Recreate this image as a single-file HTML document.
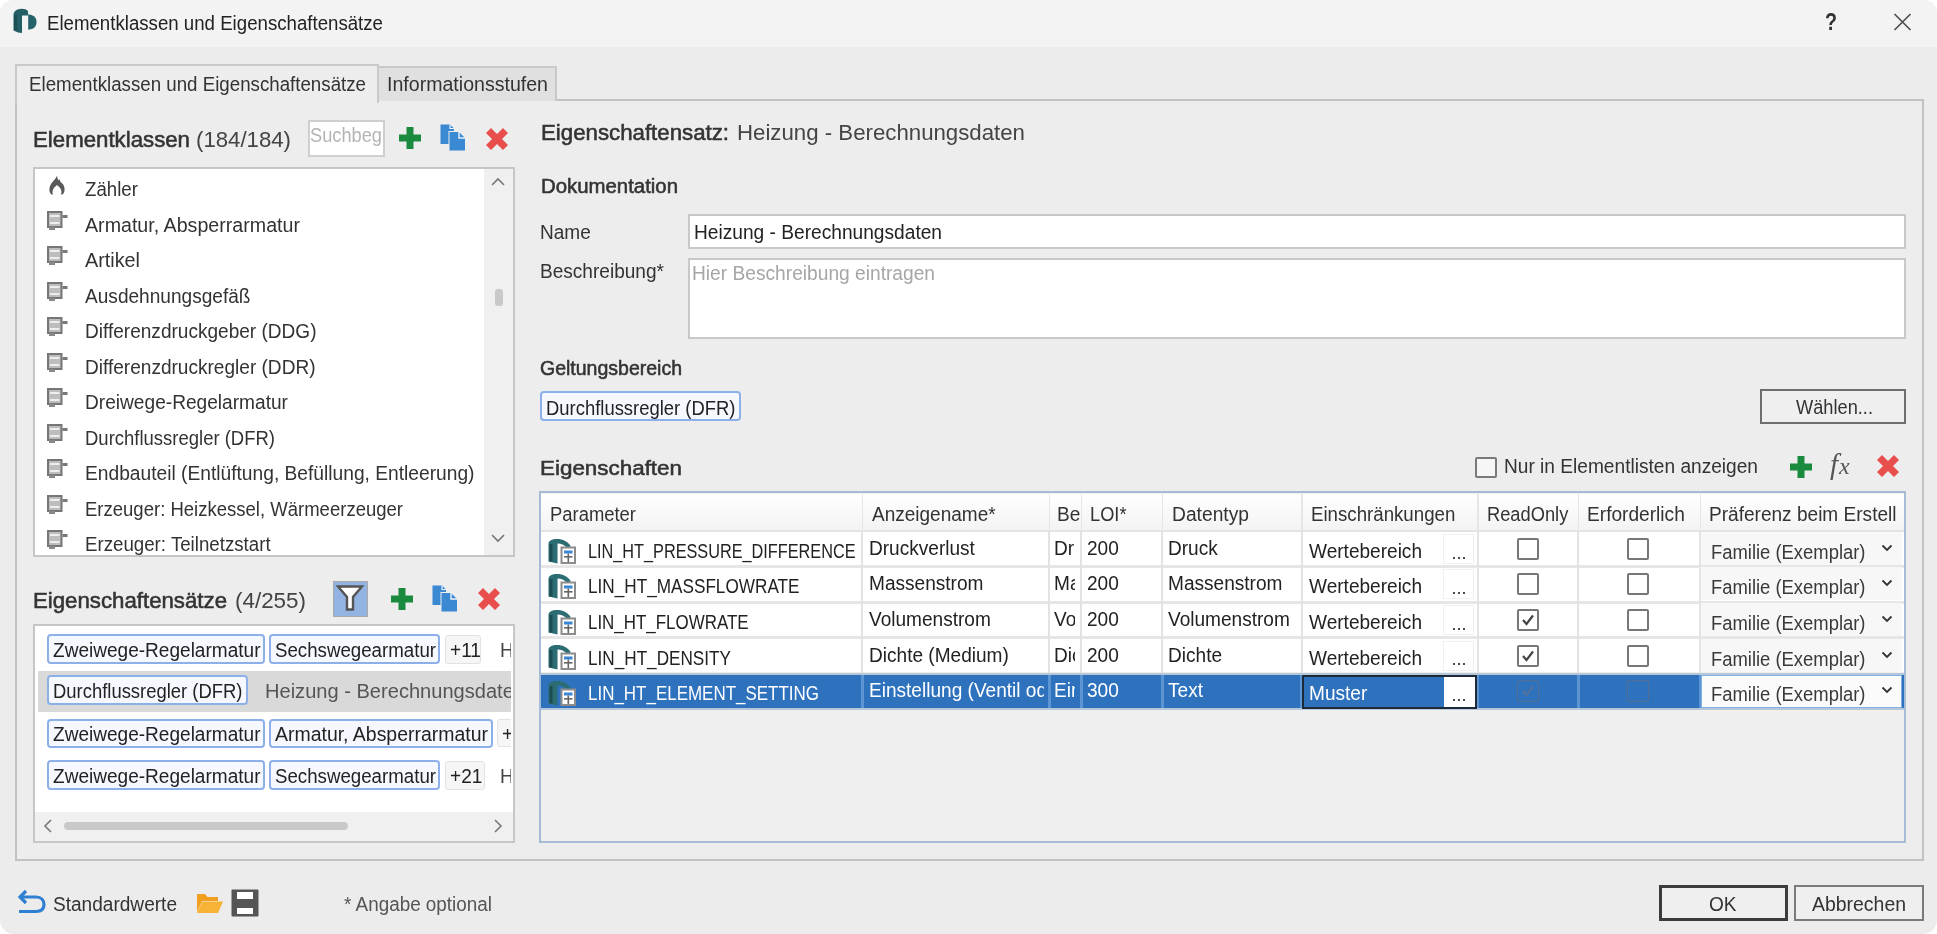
<!DOCTYPE html>
<html><head><meta charset="utf-8"><title>Elementklassen und Eigenschaftensätze</title>
<style>
html,body{margin:0;padding:0;width:1937px;height:934px;overflow:hidden;background:#ffffff;}
.t{position:absolute;line-height:1;white-space:nowrap;font-family:"Liberation Sans",sans-serif;}
.r{position:absolute;box-sizing:border-box;}
svg.r{overflow:visible;}
</style></head><body>
<div id="root" style="position:absolute;left:0;top:0;width:1937px;height:934px;filter:blur(0.6px)">
<div class="r" style="left:0.0px;top:0.0px;width:1937.0px;height:934.0px;background:#ececec;border-radius:14px;"></div>
<div class="r" style="left:0.0px;top:0.0px;width:1937.0px;height:47.0px;background:#f3f3f3;border-radius:14px 14px 0 0;"></div>
<svg class="r" style="left:12.0px;top:8.0px" width="26" height="26" viewBox="0 0 26 26"><path d="M1.5 6.5 C2 3 5 1 9.5 0.8 C12.5 0.8 14.5 1.5 16 3 L16 7.5 L10 7.5 L10 25 L6 24.5 L1.5 22.5 Z" fill="#255f66"/><path d="M3.5 7 L3.5 22" stroke="#1c4e54" stroke-width="3"/><path d="M16.2 6.2 L19.5 7 C22.5 8 24.5 10 24.5 14 C24.5 18 22.5 20.5 19.5 21 L16.2 21.7 Z" fill="#24636a"/></svg>
<div class="t " style="left:47.0px;top:13.07px;font-size:20.0px;transform:scaleX(0.9327);transform-origin:0 0;color:#222;">Elementklassen und Eigenschaftensätze</div>
<div class="t " style="left:1824.5px;top:10.18px;font-size:24.0px;font-weight:700;transform:scaleX(0.8185);transform-origin:0 0;color:#333;">?</div>
<svg class="r" style="left:1893.0px;top:13.0px" width="19" height="18" viewBox="0 0 19 18"><path d="M1.5 1 L17.5 17 M17.5 1 L1.5 17" stroke="#505050" stroke-width="1.7"/></svg>
<div class="r" style="left:15.0px;top:99.0px;width:1908.5px;height:762.0px;border:2px solid #c2c2c2;background:#ededed;"></div>
<div class="r" style="left:377.0px;top:65.5px;width:179.5px;height:35.5px;border:2px solid #c9c9c9;border-bottom:none;background:#e0e0e0;"></div>
<div class="t " style="left:386.5px;top:74.07px;font-size:20.0px;transform:scaleX(0.9785);transform-origin:0 0;color:#333;">Informationsstufen</div>
<div class="r" style="left:15.0px;top:63.5px;width:364.0px;height:39.5px;border:2px solid #c9c9c9;border-bottom:none;background:#ededed;"></div>
<div class="t " style="left:28.5px;top:74.47px;font-size:20.0px;transform:scaleX(0.9355);transform-origin:0 0;color:#333;">Elementklassen und Eigenschaftensätze</div>
<div class="t " style="left:33.3px;top:129.38px;font-size:22.0px;transform:scaleX(1.0109);transform-origin:0 0;color:#333;-webkit-text-stroke:0.55px #333;">Elementklassen</div>
<div class="t " style="left:196.0px;top:129.38px;font-size:22.0px;transform:scaleX(1.0087);transform-origin:0 0;color:#444;">(184/184)</div>
<div class="r" style="left:308.0px;top:120.0px;width:76.5px;height:36.5px;border:2px solid #cfcfcf;background:#fff;"></div>
<div class="t " style="left:310.0px;top:124.57px;font-size:20.0px;transform:scaleX(0.9119);transform-origin:0 0;color:#b4b4b4;">Suchbeg</div>
<svg class="r" style="left:398.0px;top:125.5px" width="24" height="24" viewBox="0 0 24 24"><path d="M8.5 1 H15.5 V8.5 H23 V15.5 H15.5 V23 H8.5 V15.5 H1 V8.5 H8.5Z" fill="#1a8a3e"/></svg>
<svg class="r" style="left:440.0px;top:124.0px" width="26" height="27" viewBox="0 0 26 27"><path d="M0.5 0.5 H10 L14 4.5 V7 H8.5 V20 H0.5Z" fill="#3b88d3"/><path d="M9.5 8 H19 L25 14 V26.5 H9.5Z" fill="#3b88d3"/><path d="M19 8 V14 H25" fill="none" stroke="#eaf2fb" stroke-width="1.4"/><path d="M10 0.5 V4.5 H14" fill="none" stroke="#eaf2fb" stroke-width="1.2"/></svg>
<svg class="r" style="left:486.0px;top:127.5px" width="22" height="22" viewBox="0 0 22 22"><path d="M0 5 L5 0 L11 6 L17 0 L22 5 L16 11 L22 17 L17 22 L11 16 L5 22 L0 17 L6 11Z" fill="#e84f4c"/></svg>
<div class="r" style="left:32.5px;top:167.0px;width:482.5px;height:390.0px;border:2px solid #c6c6c6;background:#fff;"></div>
<div class="r" style="left:484.0px;top:169.0px;width:29.0px;height:386.0px;background:#f0f0f0;"></div>
<div class="r" style="left:494.5px;top:288.5px;width:8.0px;height:17.5px;background:#c9c9c9;border-radius:3px;"></div>
<svg class="r" style="left:490.0px;top:177.0px" width="16" height="10" viewBox="0 0 16 10"><path d="M2 8 L8 2 L14 8" fill="none" stroke="#777" stroke-width="1.6"/></svg>
<svg class="r" style="left:490.0px;top:533.0px" width="16" height="10" viewBox="0 0 16 10"><path d="M2 2 L8 8 L14 2" fill="none" stroke="#777" stroke-width="1.6"/></svg>
<div class="r" style="left:34.5px;top:169px;width:449.5px;height:386px;overflow:hidden">
<svg class="r" style="left:13.5px;top:6.0px" width="18" height="20" viewBox="0 0 18 20"><path d="M9 0.5 C8 4 4.5 6 2.5 10 C0.5 14 1.5 18 3.5 19.5 L5 19.5 C3.8 16 5 13 9 10 C13 13 14.2 16 13 19.5 L14.5 19.5 C16.5 18 17.5 14 15.5 10 C14.5 8 12 7.5 11.5 4 C10.5 5.5 10 6 9 0.5Z" fill="#5a5a5a"/></svg>
<div class="t " style="left:50.5px;top:10.07px;font-size:20.0px;transform:scaleX(0.9349);transform-origin:0 0;color:#333;">Zähler</div>
<svg class="r" style="left:12.5px;top:41.5px" width="22" height="20" viewBox="0 0 22 20"><rect x="1" y="1" width="13.5" height="15" fill="#bdbdbd" stroke="#767676" stroke-width="2"/><rect x="3" y="4" width="9.5" height="2" fill="#eeeeee"/><rect x="3" y="11" width="9.5" height="2" fill="#eeeeee"/><rect x="15.5" y="4" width="5" height="3" fill="#777"/><rect x="2" y="16" width="6" height="3" fill="#888"/></svg>
<div class="t " style="left:50.5px;top:45.57px;font-size:20.0px;transform:scaleX(0.9818);transform-origin:0 0;color:#333;">Armatur, Absperrarmatur</div>
<svg class="r" style="left:12.5px;top:77.0px" width="22" height="20" viewBox="0 0 22 20"><rect x="1" y="1" width="13.5" height="15" fill="#bdbdbd" stroke="#767676" stroke-width="2"/><rect x="3" y="4" width="9.5" height="2" fill="#eeeeee"/><rect x="3" y="11" width="9.5" height="2" fill="#eeeeee"/><rect x="15.5" y="4" width="5" height="3" fill="#777"/><rect x="2" y="16" width="6" height="3" fill="#888"/></svg>
<div class="t " style="left:50.5px;top:81.07px;font-size:20.0px;transform:scaleX(0.9898);transform-origin:0 0;color:#333;">Artikel</div>
<svg class="r" style="left:12.5px;top:112.5px" width="22" height="20" viewBox="0 0 22 20"><rect x="1" y="1" width="13.5" height="15" fill="#bdbdbd" stroke="#767676" stroke-width="2"/><rect x="3" y="4" width="9.5" height="2" fill="#eeeeee"/><rect x="3" y="11" width="9.5" height="2" fill="#eeeeee"/><rect x="15.5" y="4" width="5" height="3" fill="#777"/><rect x="2" y="16" width="6" height="3" fill="#888"/></svg>
<div class="t " style="left:50.5px;top:116.57px;font-size:20.0px;transform:scaleX(0.9540);transform-origin:0 0;color:#333;">Ausdehnungsgefäß</div>
<svg class="r" style="left:12.5px;top:148.0px" width="22" height="20" viewBox="0 0 22 20"><rect x="1" y="1" width="13.5" height="15" fill="#bdbdbd" stroke="#767676" stroke-width="2"/><rect x="3" y="4" width="9.5" height="2" fill="#eeeeee"/><rect x="3" y="11" width="9.5" height="2" fill="#eeeeee"/><rect x="15.5" y="4" width="5" height="3" fill="#777"/><rect x="2" y="16" width="6" height="3" fill="#888"/></svg>
<div class="t " style="left:50.5px;top:152.07px;font-size:20.0px;transform:scaleX(0.9525);transform-origin:0 0;color:#333;">Differenzdruckgeber (DDG)</div>
<svg class="r" style="left:12.5px;top:183.5px" width="22" height="20" viewBox="0 0 22 20"><rect x="1" y="1" width="13.5" height="15" fill="#bdbdbd" stroke="#767676" stroke-width="2"/><rect x="3" y="4" width="9.5" height="2" fill="#eeeeee"/><rect x="3" y="11" width="9.5" height="2" fill="#eeeeee"/><rect x="15.5" y="4" width="5" height="3" fill="#777"/><rect x="2" y="16" width="6" height="3" fill="#888"/></svg>
<div class="t " style="left:50.5px;top:187.57px;font-size:20.0px;transform:scaleX(0.9528);transform-origin:0 0;color:#333;">Differenzdruckregler (DDR)</div>
<svg class="r" style="left:12.5px;top:219.0px" width="22" height="20" viewBox="0 0 22 20"><rect x="1" y="1" width="13.5" height="15" fill="#bdbdbd" stroke="#767676" stroke-width="2"/><rect x="3" y="4" width="9.5" height="2" fill="#eeeeee"/><rect x="3" y="11" width="9.5" height="2" fill="#eeeeee"/><rect x="15.5" y="4" width="5" height="3" fill="#777"/><rect x="2" y="16" width="6" height="3" fill="#888"/></svg>
<div class="t " style="left:50.5px;top:223.07px;font-size:20.0px;transform:scaleX(0.9561);transform-origin:0 0;color:#333;">Dreiwege-Regelarmatur</div>
<svg class="r" style="left:12.5px;top:254.5px" width="22" height="20" viewBox="0 0 22 20"><rect x="1" y="1" width="13.5" height="15" fill="#bdbdbd" stroke="#767676" stroke-width="2"/><rect x="3" y="4" width="9.5" height="2" fill="#eeeeee"/><rect x="3" y="11" width="9.5" height="2" fill="#eeeeee"/><rect x="15.5" y="4" width="5" height="3" fill="#777"/><rect x="2" y="16" width="6" height="3" fill="#888"/></svg>
<div class="t " style="left:50.5px;top:258.57px;font-size:20.0px;transform:scaleX(0.9242);transform-origin:0 0;color:#333;">Durchflussregler (DFR)</div>
<svg class="r" style="left:12.5px;top:290.0px" width="22" height="20" viewBox="0 0 22 20"><rect x="1" y="1" width="13.5" height="15" fill="#bdbdbd" stroke="#767676" stroke-width="2"/><rect x="3" y="4" width="9.5" height="2" fill="#eeeeee"/><rect x="3" y="11" width="9.5" height="2" fill="#eeeeee"/><rect x="15.5" y="4" width="5" height="3" fill="#777"/><rect x="2" y="16" width="6" height="3" fill="#888"/></svg>
<div class="t " style="left:50.5px;top:294.07px;font-size:20.0px;transform:scaleX(0.9597);transform-origin:0 0;color:#333;">Endbauteil (Entlüftung, Befüllung, Entleerung)</div>
<svg class="r" style="left:12.5px;top:325.5px" width="22" height="20" viewBox="0 0 22 20"><rect x="1" y="1" width="13.5" height="15" fill="#bdbdbd" stroke="#767676" stroke-width="2"/><rect x="3" y="4" width="9.5" height="2" fill="#eeeeee"/><rect x="3" y="11" width="9.5" height="2" fill="#eeeeee"/><rect x="15.5" y="4" width="5" height="3" fill="#777"/><rect x="2" y="16" width="6" height="3" fill="#888"/></svg>
<div class="t " style="left:50.5px;top:329.57px;font-size:20.0px;transform:scaleX(0.9259);transform-origin:0 0;color:#333;">Erzeuger: Heizkessel, Wärmeerzeuger</div>
<svg class="r" style="left:12.5px;top:361.0px" width="22" height="20" viewBox="0 0 22 20"><rect x="1" y="1" width="13.5" height="15" fill="#bdbdbd" stroke="#767676" stroke-width="2"/><rect x="3" y="4" width="9.5" height="2" fill="#eeeeee"/><rect x="3" y="11" width="9.5" height="2" fill="#eeeeee"/><rect x="15.5" y="4" width="5" height="3" fill="#777"/><rect x="2" y="16" width="6" height="3" fill="#888"/></svg>
<div class="t " style="left:50.5px;top:365.07px;font-size:20.0px;transform:scaleX(0.9345);transform-origin:0 0;color:#333;">Erzeuger: Teilnetzstart</div>
</div>
<div class="t " style="left:33.4px;top:590.08px;font-size:22.0px;transform:scaleX(1.0103);transform-origin:0 0;color:#333;-webkit-text-stroke:0.55px #333;">Eigenschaftensätze</div>
<div class="t " style="left:234.8px;top:590.08px;font-size:22.0px;transform:scaleX(1.0185);transform-origin:0 0;color:#444;">(4/255)</div>
<div class="r" style="left:332.5px;top:580.5px;width:35.5px;height:36.0px;border:1.5px solid #a9a9a9;background:#93b3e2;"></div>
<svg class="r" style="left:336.0px;top:585.0px" width="28" height="27" viewBox="0 0 28 27"><path d="M2 1.5 H26 L17 12 V24.5 H11 V12 Z" fill="#fff" stroke="#555" stroke-width="2.4" stroke-linejoin="miter"/></svg>
<svg class="r" style="left:390.0px;top:586.5px" width="24" height="24" viewBox="0 0 24 24"><path d="M8.5 1 H15.5 V8.5 H23 V15.5 H15.5 V23 H8.5 V15.5 H1 V8.5 H8.5Z" fill="#1a8a3e"/></svg>
<svg class="r" style="left:432.0px;top:585.0px" width="26" height="27" viewBox="0 0 26 27"><path d="M0.5 0.5 H10 L14 4.5 V7 H8.5 V20 H0.5Z" fill="#3b88d3"/><path d="M9.5 8 H19 L25 14 V26.5 H9.5Z" fill="#3b88d3"/><path d="M19 8 V14 H25" fill="none" stroke="#eaf2fb" stroke-width="1.4"/><path d="M10 0.5 V4.5 H14" fill="none" stroke="#eaf2fb" stroke-width="1.2"/></svg>
<svg class="r" style="left:478.0px;top:588.0px" width="22" height="22" viewBox="0 0 22 22"><path d="M0 5 L5 0 L11 6 L17 0 L22 5 L16 11 L22 17 L17 22 L11 16 L5 22 L0 17 L6 11Z" fill="#e84f4c"/></svg>
<div class="r" style="left:32.5px;top:624.0px;width:482.5px;height:218.5px;border:2px solid #c6c6c6;background:#fff;"></div>
<div class="r" style="left:38.0px;top:670.5px;width:472.5px;height:41.0px;background:#d9d9d9;"></div>
<div class="r" style="left:34.5px;top:812.0px;width:478.5px;height:28.5px;background:#f0f0f0;"></div>
<div class="r" style="left:63.5px;top:821.5px;width:284.0px;height:8.0px;background:#c9c9c9;border-radius:4px;"></div>
<svg class="r" style="left:43.0px;top:818.0px" width="10" height="16" viewBox="0 0 10 16"><path d="M8 2 L2 8 L8 14" fill="none" stroke="#777" stroke-width="1.6"/></svg>
<svg class="r" style="left:493.0px;top:818.0px" width="10" height="16" viewBox="0 0 10 16"><path d="M2 2 L8 8 L2 14" fill="none" stroke="#777" stroke-width="1.6"/></svg>
<div class="r" style="left:34.5px;top:626px;width:476px;height:186px;overflow:hidden">
<div class="r" style="left:12.6px;top:7.8px;width:218.3px;height:30.2px;border:2px solid #8db0ea;border-radius:4px;background:#f5f9ff;"></div>
<div class="t " style="left:18.7px;top:13.57px;font-size:20.0px;transform:scaleX(0.9524);transform-origin:0 0;color:#222;">Zweiwege-Regelarmatur</div>
<div class="r" style="left:234.7px;top:7.8px;width:171.2px;height:30.2px;border:2px solid #8db0ea;border-radius:4px;background:#f5f9ff;"></div>
<div class="t " style="left:240.8px;top:13.57px;font-size:20.0px;transform:scaleX(0.9344);transform-origin:0 0;color:#222;">Sechswegearmatur</div>
<div class="r" style="left:410.5px;top:8.5px;width:36.0px;height:29.0px;border:1.5px solid #e2e2e2;border-radius:3px;background:#f6f6f6;"></div>
<div class="t " style="left:415.5px;top:13.57px;font-size:20.0px;transform:scaleX(0.953);transform-origin:0 0;color:#222;">+11</div>
<div class="t " style="left:465.5px;top:13.57px;font-size:20.0px;transform:scaleX(0.953);transform-origin:0 0;color:#444;">H</div>
<div class="r" style="left:12.6px;top:49.2px;width:200.9px;height:30.1px;border:2px solid #8db0ea;border-radius:4px;background:#f5f9ff;"></div>
<div class="t " style="left:18.7px;top:54.87px;font-size:20.0px;transform:scaleX(0.9217);transform-origin:0 0;color:#222;">Durchflussregler (DFR)</div>
<div class="t " style="left:230.5px;top:55.07px;font-size:20.0px;transform:scaleX(1.0036);transform-origin:0 0;color:#555;">Heizung - Berechnungsdaten</div>
<div class="r" style="left:12.6px;top:92.6px;width:218.3px;height:29.4px;border:2px solid #8db0ea;border-radius:4px;background:#f5f9ff;"></div>
<div class="t " style="left:18.7px;top:97.57px;font-size:20.0px;transform:scaleX(0.9524);transform-origin:0 0;color:#222;">Zweiwege-Regelarmatur</div>
<div class="r" style="left:234.7px;top:92.6px;width:224.2px;height:29.4px;border:2px solid #8db0ea;border-radius:4px;background:#f5f9ff;"></div>
<div class="t " style="left:240.8px;top:97.57px;font-size:20.0px;transform:scaleX(0.9727);transform-origin:0 0;color:#222;">Armatur, Absperrarmatur</div>
<div class="r" style="left:462.5px;top:93.3px;width:23.0px;height:28.2px;border:1.5px solid #e2e2e2;border-radius:3px;background:#f6f6f6;"></div>
<div class="t " style="left:467.5px;top:97.57px;font-size:20.0px;transform:scaleX(0.953);transform-origin:0 0;color:#222;">+</div>
<div class="r" style="left:12.6px;top:134.0px;width:218.3px;height:30.1px;border:2px solid #8db0ea;border-radius:4px;background:#f5f9ff;"></div>
<div class="t " style="left:18.7px;top:139.67px;font-size:20.0px;transform:scaleX(0.9524);transform-origin:0 0;color:#222;">Zweiwege-Regelarmatur</div>
<div class="r" style="left:234.7px;top:134.0px;width:171.2px;height:30.1px;border:2px solid #8db0ea;border-radius:4px;background:#f5f9ff;"></div>
<div class="t " style="left:240.8px;top:139.67px;font-size:20.0px;transform:scaleX(0.9344);transform-origin:0 0;color:#222;">Sechswegearmatur</div>
<div class="r" style="left:410.5px;top:134.7px;width:40.0px;height:28.9px;border:1.5px solid #e2e2e2;border-radius:3px;background:#f6f6f6;"></div>
<div class="t " style="left:415.5px;top:139.67px;font-size:20.0px;transform:scaleX(0.953);transform-origin:0 0;color:#222;">+21</div>
<div class="t " style="left:465.5px;top:140.07px;font-size:20.0px;transform:scaleX(0.953);transform-origin:0 0;color:#444;">H</div>
</div>
<div class="t " style="left:540.6px;top:122.38px;font-size:22.0px;transform:scaleX(1.0113);transform-origin:0 0;color:#333;-webkit-text-stroke:0.55px #333;">Eigenschaftensatz:</div>
<div class="t " style="left:736.9px;top:122.38px;font-size:22.0px;transform:scaleX(1.0106);transform-origin:0 0;color:#444;">Heizung - Berechnungsdaten</div>
<div class="t " style="left:540.6px;top:176.07px;font-size:20.0px;transform:scaleX(1.0184);transform-origin:0 0;color:#333;-webkit-text-stroke:0.55px #333;">Dokumentation</div>
<div class="t " style="left:540.3px;top:222.07px;font-size:20.0px;transform:scaleX(0.953);transform-origin:0 0;color:#333;">Name</div>
<div class="r" style="left:687.5px;top:213.5px;width:1218.5px;height:35.5px;border:2px solid #c8c8c8;background:#fff;"></div>
<div class="t " style="left:693.8px;top:222.07px;font-size:20.0px;transform:scaleX(0.9573);transform-origin:0 0;color:#222;">Heizung - Berechnungsdaten</div>
<div class="t " style="left:540.3px;top:260.67px;font-size:20.0px;transform:scaleX(0.953);transform-origin:0 0;color:#333;">Beschreibung*</div>
<div class="r" style="left:687.5px;top:257.5px;width:1218.5px;height:81.0px;border:2px solid #c8c8c8;background:#fff;"></div>
<div class="t " style="left:691.5px;top:263.07px;font-size:20.0px;transform:scaleX(0.9586);transform-origin:0 0;color:#a6a6a6;">Hier Beschreibung eintragen</div>
<div class="t " style="left:539.6px;top:358.07px;font-size:20.0px;transform:scaleX(0.9750);transform-origin:0 0;color:#333;-webkit-text-stroke:0.55px #333;">Geltungsbereich</div>
<div class="r" style="left:540.4px;top:391.4px;width:200.6px;height:29.9px;border:2px solid #8db0ea;border-radius:4px;background:#f5f9ff;"></div>
<div class="t " style="left:546.0px;top:397.77px;font-size:20.0px;transform:scaleX(0.9217);transform-origin:0 0;color:#222;">Durchflussregler (DFR)</div>
<div class="r" style="left:1759.5px;top:389.0px;width:146.0px;height:35.0px;border:2px solid #6e6e6e;background:#efefef;"></div>
<div class="t " style="left:1795.5px;top:397.07px;font-size:20.0px;transform:scaleX(0.9114);transform-origin:0 0;color:#333;">Wählen...</div>
<div class="t " style="left:539.6px;top:457.22px;font-size:21.0px;transform:scaleX(1.0669);transform-origin:0 0;color:#333;-webkit-text-stroke:0.55px #333;">Eigenschaften</div>
<div class="r" style="left:1475.0px;top:456.5px;width:22.0px;height:21.5px;border:2px solid #7a7a7a;border-radius:2px;background:#f6f6f6;"></div>
<div class="t " style="left:1503.8px;top:456.07px;font-size:20.0px;transform:scaleX(0.9559);transform-origin:0 0;color:#333;">Nur in Elementlisten anzeigen</div>
<svg class="r" style="left:1788.5px;top:454.5px" width="24" height="24" viewBox="0 0 24 24"><path d="M8.5 1 H15.5 V8.5 H23 V15.5 H15.5 V23 H8.5 V15.5 H1 V8.5 H8.5Z" fill="#1a8a3e"/></svg>
<div class="t" style="left:1830px;top:450px;font-family:'Liberation Serif',serif;font-style:italic;font-size:29px;color:#555;">f<span style="font-size:24px;margin-left:1px">x</span></div>
<svg class="r" style="left:1876.5px;top:454.5px" width="22" height="22" viewBox="0 0 22 22"><path d="M0 5 L5 0 L11 6 L17 0 L22 5 L16 11 L22 17 L17 22 L11 16 L5 22 L0 17 L6 11Z" fill="#e84f4c"/></svg>
<div class="r" style="left:538.5px;top:491.0px;width:1367.0px;height:352.0px;border:2.5px solid #a5bbd6;background:#efefef;"></div>
<div class="r" style="left:540.5px;top:493.5px;width:1363.0px;height:37.5px;background:linear-gradient(#ffffff,#f3f3f3);"></div>
<div class="r" style="left:540.5px;top:529.5px;width:1363.0px;height:2.0px;background:#e3e3e3;"></div>
<div class="r" style="left:861.5px;top:493.5px;width:1.5px;height:37.5px;background:#e6e6e6;"></div>
<div class="r" style="left:1048.5px;top:493.5px;width:1.5px;height:37.5px;background:#e6e6e6;"></div>
<div class="r" style="left:1080.5px;top:493.5px;width:1.5px;height:37.5px;background:#e6e6e6;"></div>
<div class="r" style="left:1161.8px;top:493.5px;width:1.5px;height:37.5px;background:#e6e6e6;"></div>
<div class="r" style="left:1301.0px;top:493.5px;width:1.5px;height:37.5px;background:#e6e6e6;"></div>
<div class="r" style="left:1477.2px;top:493.5px;width:1.5px;height:37.5px;background:#e6e6e6;"></div>
<div class="r" style="left:1577.5px;top:493.5px;width:1.5px;height:37.5px;background:#e6e6e6;"></div>
<div class="r" style="left:1699.5px;top:493.5px;width:1.5px;height:37.5px;background:#e6e6e6;"></div>
<div class="t " style="left:550.0px;top:504.07px;font-size:20.0px;transform:scaleX(0.9210);transform-origin:0 0;color:#333;">Parameter</div>
<div class="t " style="left:871.5px;top:504.07px;font-size:20.0px;transform:scaleX(0.9501);transform-origin:0 0;color:#333;">Anzeigename*</div>
<div class="r" style="left:1051px;top:495px;width:29px;height:34px;overflow:hidden">
<div class="t " style="left:6.0px;top:9.07px;font-size:20.0px;transform:scaleX(0.953);transform-origin:0 0;color:#333;">Beschreibung</div>
</div>
<div class="t " style="left:1089.5px;top:504.07px;font-size:20.0px;transform:scaleX(0.9121);transform-origin:0 0;color:#333;">LOI*</div>
<div class="t " style="left:1171.5px;top:504.07px;font-size:20.0px;transform:scaleX(0.9619);transform-origin:0 0;color:#333;">Datentyp</div>
<div class="t " style="left:1310.5px;top:504.07px;font-size:20.0px;transform:scaleX(0.9336);transform-origin:0 0;color:#333;">Einschränkungen</div>
<div class="t " style="left:1487.0px;top:504.07px;font-size:20.0px;transform:scaleX(0.9141);transform-origin:0 0;color:#333;">ReadOnly</div>
<div class="t " style="left:1587.0px;top:504.07px;font-size:20.0px;transform:scaleX(0.9564);transform-origin:0 0;color:#333;">Erforderlich</div>
<div class="r" style="left:1701px;top:495px;width:196px;height:34px;overflow:hidden">
<div class="t " style="left:8.0px;top:9.07px;font-size:20.0px;transform:scaleX(0.953);transform-origin:0 0;color:#333;">Präferenz beim Erstellen</div>
</div>
<div class="r" style="left:540.5px;top:532.0px;width:1363.0px;height:33.4px;background:#fff;"></div>
<div class="r" style="left:540.5px;top:567.4px;width:1363.0px;height:33.6px;background:#fff;"></div>
<div class="r" style="left:540.5px;top:603.0px;width:1363.0px;height:33.7px;background:#fff;"></div>
<div class="r" style="left:540.5px;top:638.7px;width:1363.0px;height:33.7px;background:#fff;"></div>
<div class="r" style="left:540.5px;top:674.8px;width:1363.0px;height:33.2px;background:#2e72be;"></div>
<div class="r" style="left:540.5px;top:564.9px;width:1363.0px;height:3.0px;background:#e6e6e6;"></div>
<div class="r" style="left:540.5px;top:600.5px;width:1363.0px;height:3.0px;background:#e6e6e6;"></div>
<div class="r" style="left:540.5px;top:636.2px;width:1363.0px;height:3.0px;background:#e6e6e6;"></div>
<div class="r" style="left:540.5px;top:672.8px;width:1363.0px;height:2.0px;background:#b7c7da;"></div>
<div class="r" style="left:540.5px;top:708.0px;width:1363.0px;height:2.0px;background:#b7c7da;"></div>
<div class="r" style="left:861.0px;top:531.0px;width:2.0px;height:141.8px;background:#e3e3e3;"></div>
<div class="r" style="left:1048.0px;top:531.0px;width:2.0px;height:141.8px;background:#e3e3e3;"></div>
<div class="r" style="left:1080.0px;top:531.0px;width:2.0px;height:141.8px;background:#e3e3e3;"></div>
<div class="r" style="left:1161.3px;top:531.0px;width:2.0px;height:141.8px;background:#e3e3e3;"></div>
<div class="r" style="left:1300.5px;top:531.0px;width:2.0px;height:141.8px;background:#e3e3e3;"></div>
<div class="r" style="left:1476.7px;top:531.0px;width:2.0px;height:141.8px;background:#e3e3e3;"></div>
<div class="r" style="left:1577.0px;top:531.0px;width:2.0px;height:141.8px;background:#e3e3e3;"></div>
<div class="r" style="left:1699.0px;top:531.0px;width:2.0px;height:141.8px;background:#e3e3e3;"></div>
<div class="r" style="left:860.5px;top:674.8px;width:3.0px;height:33.2px;background:#5b95d3;"></div>
<div class="r" style="left:1047.5px;top:674.8px;width:3.0px;height:33.2px;background:#5b95d3;"></div>
<div class="r" style="left:1079.5px;top:674.8px;width:3.0px;height:33.2px;background:#5b95d3;"></div>
<div class="r" style="left:1160.8px;top:674.8px;width:3.0px;height:33.2px;background:#5b95d3;"></div>
<div class="r" style="left:1300.0px;top:674.8px;width:3.0px;height:33.2px;background:#5b95d3;"></div>
<div class="r" style="left:1476.2px;top:674.8px;width:3.0px;height:33.2px;background:#5b95d3;"></div>
<div class="r" style="left:1576.5px;top:674.8px;width:3.0px;height:33.2px;background:#5b95d3;"></div>
<div class="r" style="left:1698.5px;top:674.8px;width:3.0px;height:33.2px;background:#5b95d3;"></div>
<svg class="r" style="left:548.0px;top:537.5px" width="28" height="27" viewBox="0 0 28 27"><path d="M0.5 6 C0.5 2.5 4 1 9 1 C15 1 20 3.5 23 8.5 L18.5 9.5 C16.5 7 13 5.5 9.5 5.5 L9.5 25.5 L0.5 23.5 Z" fill="#2b6d73"/><path d="M3 6 L3 23.5" stroke="#1b4d53" stroke-width="3"/><rect x="13.5" y="9.5" width="13.5" height="15.5" fill="#fff" stroke="#8c8c8c" stroke-width="2"/><rect x="16" y="12.5" width="8.5" height="3" fill="#3a86d6"/><rect x="16" y="18" width="8.5" height="1.6" fill="#666"/><rect x="19.5" y="15.5" width="1.6" height="8.5" fill="#666"/></svg>
<div class="t " style="left:587.7px;top:541.07px;font-size:20.0px;transform:scaleX(0.8131);transform-origin:0 0;color:#222;">LIN_HT_PRESSURE_DIFFERENCE</div>
<div class="r" style="left:864px;top:531.0px;width:180px;height:30px;overflow:hidden">
<div class="t " style="left:4.5px;top:6.87px;font-size:20.0px;transform:scaleX(0.953);transform-origin:0 0;color:#222;">Druckverlust</div>
</div>
<div class="r" style="left:1051px;top:531.0px;width:24px;height:30px;overflow:hidden">
<div class="t " style="left:3.3px;top:6.87px;font-size:20.0px;transform:scaleX(0.953);transform-origin:0 0;color:#222;">Druckverlust</div>
</div>
<div class="t " style="left:1086.8px;top:537.87px;font-size:20.0px;transform:scaleX(0.953);transform-origin:0 0;color:#222;">200</div>
<div class="t " style="left:1168.0px;top:537.87px;font-size:20.0px;transform:scaleX(0.953);transform-origin:0 0;color:#222;">Druck</div>
<div class="r" style="left:1443.0px;top:534.0px;width:31.0px;height:30.0px;background:#fff;border:1px solid #f0f0f0;"></div>
<div class="t " style="left:1308.8px;top:541.07px;font-size:20.0px;transform:scaleX(0.953);transform-origin:0 0;color:#222;">Wertebereich</div>
<div class="r" style="left:1452.5px;top:556.5px;width:14px;height:2px;background-image:linear-gradient(90deg,#4a4a4a 2px,transparent 2px);background-size:5px 2px;"></div>
<div class="r" style="left:1516.5px;top:538.0px;width:22.0px;height:22.0px;border:2px solid #777;border-radius:2px;background:#fff;"></div>
<div class="r" style="left:1626.5px;top:538.0px;width:22.0px;height:22.0px;border:2px solid #777;border-radius:2px;background:#fff;"></div>
<div class="r" style="left:1701.0px;top:532.0px;width:201.0px;height:33.0px;background:#f7f7f7;"></div>
<div class="t " style="left:1710.8px;top:542.07px;font-size:20.0px;transform:scaleX(0.9207);transform-origin:0 0;color:#3a3a3a;">Familie (Exemplar)</div>
<svg class="r" style="left:1881.0px;top:544.0px" width="12" height="8" viewBox="0 0 12 8"><path d="M1.5 1.5 L6 6 L10.5 1.5" fill="none" stroke="#333" stroke-width="1.8"/></svg>
<svg class="r" style="left:548.0px;top:572.9px" width="28" height="27" viewBox="0 0 28 27"><path d="M0.5 6 C0.5 2.5 4 1 9 1 C15 1 20 3.5 23 8.5 L18.5 9.5 C16.5 7 13 5.5 9.5 5.5 L9.5 25.5 L0.5 23.5 Z" fill="#2b6d73"/><path d="M3 6 L3 23.5" stroke="#1b4d53" stroke-width="3"/><rect x="13.5" y="9.5" width="13.5" height="15.5" fill="#fff" stroke="#8c8c8c" stroke-width="2"/><rect x="16" y="12.5" width="8.5" height="3" fill="#3a86d6"/><rect x="16" y="18" width="8.5" height="1.6" fill="#666"/><rect x="19.5" y="15.5" width="1.6" height="8.5" fill="#666"/></svg>
<div class="t " style="left:587.7px;top:576.47px;font-size:20.0px;transform:scaleX(0.8586);transform-origin:0 0;color:#222;">LIN_HT_MASSFLOWRATE</div>
<div class="r" style="left:864px;top:566.4px;width:180px;height:30px;overflow:hidden">
<div class="t " style="left:4.5px;top:6.87px;font-size:20.0px;transform:scaleX(0.953);transform-origin:0 0;color:#222;">Massenstrom</div>
</div>
<div class="r" style="left:1051px;top:566.4px;width:24px;height:30px;overflow:hidden">
<div class="t " style="left:3.3px;top:6.87px;font-size:20.0px;transform:scaleX(0.953);transform-origin:0 0;color:#222;">Massenstrom</div>
</div>
<div class="t " style="left:1086.8px;top:573.27px;font-size:20.0px;transform:scaleX(0.953);transform-origin:0 0;color:#222;">200</div>
<div class="t " style="left:1168.0px;top:573.27px;font-size:20.0px;transform:scaleX(0.953);transform-origin:0 0;color:#222;">Massenstrom</div>
<div class="r" style="left:1443.0px;top:569.4px;width:31.0px;height:30.0px;background:#fff;border:1px solid #f0f0f0;"></div>
<div class="t " style="left:1308.8px;top:576.47px;font-size:20.0px;transform:scaleX(0.953);transform-origin:0 0;color:#222;">Wertebereich</div>
<div class="r" style="left:1452.5px;top:591.9px;width:14px;height:2px;background-image:linear-gradient(90deg,#4a4a4a 2px,transparent 2px);background-size:5px 2px;"></div>
<div class="r" style="left:1516.5px;top:573.4px;width:22.0px;height:22.0px;border:2px solid #777;border-radius:2px;background:#fff;"></div>
<div class="r" style="left:1626.5px;top:573.4px;width:22.0px;height:22.0px;border:2px solid #777;border-radius:2px;background:#fff;"></div>
<div class="r" style="left:1701.0px;top:567.4px;width:201.0px;height:33.0px;background:#f7f7f7;"></div>
<div class="t " style="left:1710.8px;top:577.47px;font-size:20.0px;transform:scaleX(0.9207);transform-origin:0 0;color:#3a3a3a;">Familie (Exemplar)</div>
<svg class="r" style="left:1881.0px;top:579.4px" width="12" height="8" viewBox="0 0 12 8"><path d="M1.5 1.5 L6 6 L10.5 1.5" fill="none" stroke="#333" stroke-width="1.8"/></svg>
<svg class="r" style="left:548.0px;top:608.5px" width="28" height="27" viewBox="0 0 28 27"><path d="M0.5 6 C0.5 2.5 4 1 9 1 C15 1 20 3.5 23 8.5 L18.5 9.5 C16.5 7 13 5.5 9.5 5.5 L9.5 25.5 L0.5 23.5 Z" fill="#2b6d73"/><path d="M3 6 L3 23.5" stroke="#1b4d53" stroke-width="3"/><rect x="13.5" y="9.5" width="13.5" height="15.5" fill="#fff" stroke="#8c8c8c" stroke-width="2"/><rect x="16" y="12.5" width="8.5" height="3" fill="#3a86d6"/><rect x="16" y="18" width="8.5" height="1.6" fill="#666"/><rect x="19.5" y="15.5" width="1.6" height="8.5" fill="#666"/></svg>
<div class="t " style="left:587.7px;top:612.07px;font-size:20.0px;transform:scaleX(0.8468);transform-origin:0 0;color:#222;">LIN_HT_FLOWRATE</div>
<div class="r" style="left:864px;top:602.0px;width:180px;height:30px;overflow:hidden">
<div class="t " style="left:4.5px;top:6.87px;font-size:20.0px;transform:scaleX(0.953);transform-origin:0 0;color:#222;">Volumenstrom</div>
</div>
<div class="r" style="left:1051px;top:602.0px;width:24px;height:30px;overflow:hidden">
<div class="t " style="left:3.3px;top:6.87px;font-size:20.0px;transform:scaleX(0.953);transform-origin:0 0;color:#222;">Volumenstrom</div>
</div>
<div class="t " style="left:1086.8px;top:608.87px;font-size:20.0px;transform:scaleX(0.953);transform-origin:0 0;color:#222;">200</div>
<div class="t " style="left:1168.0px;top:608.87px;font-size:20.0px;transform:scaleX(0.953);transform-origin:0 0;color:#222;">Volumenstrom</div>
<div class="r" style="left:1443.0px;top:605.0px;width:31.0px;height:30.0px;background:#fff;border:1px solid #f0f0f0;"></div>
<div class="t " style="left:1308.8px;top:612.07px;font-size:20.0px;transform:scaleX(0.953);transform-origin:0 0;color:#222;">Wertebereich</div>
<div class="r" style="left:1452.5px;top:627.5px;width:14px;height:2px;background-image:linear-gradient(90deg,#4a4a4a 2px,transparent 2px);background-size:5px 2px;"></div>
<div class="r" style="left:1516.5px;top:609.0px;width:22.0px;height:22.0px;border:2px solid #777;border-radius:2px;background:#fff;"></div>
<svg class="r" style="left:1520.5px;top:613.0px" width="14" height="14" viewBox="0 0 14 14"><path d="M2 7 L5.5 11 L12 2.5" fill="none" stroke="#444" stroke-width="2.2"/></svg>
<div class="r" style="left:1626.5px;top:609.0px;width:22.0px;height:22.0px;border:2px solid #777;border-radius:2px;background:#fff;"></div>
<div class="r" style="left:1701.0px;top:603.0px;width:201.0px;height:33.0px;background:#f7f7f7;"></div>
<div class="t " style="left:1710.8px;top:613.07px;font-size:20.0px;transform:scaleX(0.9207);transform-origin:0 0;color:#3a3a3a;">Familie (Exemplar)</div>
<svg class="r" style="left:1881.0px;top:615.0px" width="12" height="8" viewBox="0 0 12 8"><path d="M1.5 1.5 L6 6 L10.5 1.5" fill="none" stroke="#333" stroke-width="1.8"/></svg>
<svg class="r" style="left:548.0px;top:644.2px" width="28" height="27" viewBox="0 0 28 27"><path d="M0.5 6 C0.5 2.5 4 1 9 1 C15 1 20 3.5 23 8.5 L18.5 9.5 C16.5 7 13 5.5 9.5 5.5 L9.5 25.5 L0.5 23.5 Z" fill="#2b6d73"/><path d="M3 6 L3 23.5" stroke="#1b4d53" stroke-width="3"/><rect x="13.5" y="9.5" width="13.5" height="15.5" fill="#fff" stroke="#8c8c8c" stroke-width="2"/><rect x="16" y="12.5" width="8.5" height="3" fill="#3a86d6"/><rect x="16" y="18" width="8.5" height="1.6" fill="#666"/><rect x="19.5" y="15.5" width="1.6" height="8.5" fill="#666"/></svg>
<div class="t " style="left:587.7px;top:647.77px;font-size:20.0px;transform:scaleX(0.8578);transform-origin:0 0;color:#222;">LIN_HT_DENSITY</div>
<div class="r" style="left:864px;top:637.7px;width:180px;height:30px;overflow:hidden">
<div class="t " style="left:4.5px;top:6.87px;font-size:20.0px;transform:scaleX(0.953);transform-origin:0 0;color:#222;">Dichte (Medium)</div>
</div>
<div class="r" style="left:1051px;top:637.7px;width:24px;height:30px;overflow:hidden">
<div class="t " style="left:3.3px;top:6.87px;font-size:20.0px;transform:scaleX(0.953);transform-origin:0 0;color:#222;">Dichte (Medium)</div>
</div>
<div class="t " style="left:1086.8px;top:644.57px;font-size:20.0px;transform:scaleX(0.953);transform-origin:0 0;color:#222;">200</div>
<div class="t " style="left:1168.0px;top:644.57px;font-size:20.0px;transform:scaleX(0.953);transform-origin:0 0;color:#222;">Dichte</div>
<div class="r" style="left:1443.0px;top:640.7px;width:31.0px;height:30.0px;background:#fff;border:1px solid #f0f0f0;"></div>
<div class="t " style="left:1308.8px;top:647.77px;font-size:20.0px;transform:scaleX(0.953);transform-origin:0 0;color:#222;">Wertebereich</div>
<div class="r" style="left:1452.5px;top:663.2px;width:14px;height:2px;background-image:linear-gradient(90deg,#4a4a4a 2px,transparent 2px);background-size:5px 2px;"></div>
<div class="r" style="left:1516.5px;top:644.7px;width:22.0px;height:22.0px;border:2px solid #777;border-radius:2px;background:#fff;"></div>
<svg class="r" style="left:1520.5px;top:648.7px" width="14" height="14" viewBox="0 0 14 14"><path d="M2 7 L5.5 11 L12 2.5" fill="none" stroke="#444" stroke-width="2.2"/></svg>
<div class="r" style="left:1626.5px;top:644.7px;width:22.0px;height:22.0px;border:2px solid #777;border-radius:2px;background:#fff;"></div>
<div class="r" style="left:1701.0px;top:638.7px;width:201.0px;height:33.0px;background:#f7f7f7;"></div>
<div class="t " style="left:1710.8px;top:648.77px;font-size:20.0px;transform:scaleX(0.9207);transform-origin:0 0;color:#3a3a3a;">Familie (Exemplar)</div>
<svg class="r" style="left:1881.0px;top:650.7px" width="12" height="8" viewBox="0 0 12 8"><path d="M1.5 1.5 L6 6 L10.5 1.5" fill="none" stroke="#333" stroke-width="1.8"/></svg>
<svg class="r" style="left:548.0px;top:679.9px" width="28" height="27" viewBox="0 0 28 27"><path d="M0.5 6 C0.5 2.5 4 1 9 1 C15 1 20 3.5 23 8.5 L18.5 9.5 C16.5 7 13 5.5 9.5 5.5 L9.5 25.5 L0.5 23.5 Z" fill="#2b6d73"/><path d="M3 6 L3 23.5" stroke="#1b4d53" stroke-width="3"/><rect x="13.5" y="9.5" width="13.5" height="15.5" fill="#fff" stroke="#8c8c8c" stroke-width="2"/><rect x="16" y="12.5" width="8.5" height="3" fill="#3a86d6"/><rect x="16" y="18" width="8.5" height="1.6" fill="#666"/><rect x="19.5" y="15.5" width="1.6" height="8.5" fill="#666"/></svg>
<div class="t " style="left:587.7px;top:683.47px;font-size:20.0px;transform:scaleX(0.8483);transform-origin:0 0;color:#fff;">LIN_HT_ELEMENT_SETTING</div>
<div class="r" style="left:864px;top:673.4px;width:180px;height:30px;overflow:hidden">
<div class="t " style="left:4.5px;top:6.87px;font-size:20.0px;transform:scaleX(0.953);transform-origin:0 0;color:#fff;">Einstellung (Ventil oder</div>
</div>
<div class="r" style="left:1051px;top:673.4px;width:24px;height:30px;overflow:hidden">
<div class="t " style="left:3.3px;top:6.87px;font-size:20.0px;transform:scaleX(0.953);transform-origin:0 0;color:#fff;">Einstellung</div>
</div>
<div class="t " style="left:1086.8px;top:680.27px;font-size:20.0px;transform:scaleX(0.953);transform-origin:0 0;color:#fff;">300</div>
<div class="t " style="left:1168.0px;top:680.27px;font-size:20.0px;transform:scaleX(0.953);transform-origin:0 0;color:#fff;">Text</div>
<div class="r" style="left:1302.0px;top:674.6px;width:175.0px;height:34.6px;border:2px solid #1f2a38;background:#2e72be;"></div>
<div class="r" style="left:1443.5px;top:676.6px;width:31.5px;height:30.6px;background:#fff;"></div>
<div class="t " style="left:1308.8px;top:682.87px;font-size:20.0px;transform:scaleX(0.953);transform-origin:0 0;color:#fff;">Muster</div>
<div class="r" style="left:1452.5px;top:698.9px;width:14px;height:2px;background-image:linear-gradient(90deg,#4a4a4a 2px,transparent 2px);background-size:5px 2px;"></div>
<div class="r" style="left:1516.5px;top:680.4px;width:22.0px;height:22.0px;border:1.5px solid #4f6f95;border-radius:2px;"></div>
<svg class="r" style="left:1520.5px;top:684.4px" width="14" height="14" viewBox="0 0 14 14"><path d="M2 7 L5.5 11 L12 2.5" fill="none" stroke="#56729a" stroke-width="2"/></svg>
<div class="r" style="left:1626.5px;top:680.4px;width:22.0px;height:22.0px;border:1.5px solid #4f6f95;border-radius:2px;"></div>
<div class="r" style="left:1701.0px;top:674.8px;width:201.0px;height:33.7px;border:1.5px solid #7fb0e6;background:#fbfbfb;"></div>
<div class="t " style="left:1710.8px;top:684.47px;font-size:20.0px;transform:scaleX(0.9207);transform-origin:0 0;color:#3a3a3a;">Familie (Exemplar)</div>
<svg class="r" style="left:1881.0px;top:686.4px" width="12" height="8" viewBox="0 0 12 8"><path d="M1.5 1.5 L6 6 L10.5 1.5" fill="none" stroke="#333" stroke-width="1.8"/></svg>
<svg class="r" style="left:17.0px;top:889.0px" width="30" height="26" viewBox="0 0 30 26"><path d="M9 2 L3 8 L9 14" fill="none" stroke="#2f7fd2" stroke-width="3.2"/><path d="M3.5 8 H19 C24.5 8 27 11.5 27 15.5 C27 19.5 24.5 22.5 19 22.5 H2" fill="none" stroke="#2f7fd2" stroke-width="3.2"/></svg>
<div class="t " style="left:52.7px;top:893.77px;font-size:20.0px;transform:scaleX(0.9532);transform-origin:0 0;color:#333;">Standardwerte</div>
<svg class="r" style="left:195.5px;top:891.0px" width="28" height="24" viewBox="0 0 28 24"><path d="M1 3 H9 L11.5 6 H22 V10 H6 L1 21Z" fill="#f0a01e"/><path d="M6 10.5 H27 L22 22 H1Z" fill="#f7b335"/></svg>
<svg class="r" style="left:231.0px;top:888.5px" width="28" height="28" viewBox="0 0 28 28"><rect x="0.5" y="0.5" width="27" height="27" rx="1" fill="#555"/><rect x="6" y="3" width="16" height="7" fill="#fff"/><rect x="6" y="19" width="16" height="6" fill="#fff"/></svg>
<div class="t " style="left:343.8px;top:893.67px;font-size:20.0px;transform:scaleX(0.9438);transform-origin:0 0;color:#555;">* Angabe optional</div>
<div class="r" style="left:1658.5px;top:884.5px;width:129.0px;height:36.0px;border:3px solid #3c3c3c;background:#efefef;"></div>
<div class="t " style="left:1709.0px;top:893.57px;font-size:20.0px;transform:scaleX(0.953);transform-origin:0 0;color:#333;">OK</div>
<div class="r" style="left:1794.0px;top:884.5px;width:130.0px;height:36.0px;border:2px solid #7a7a7a;background:#efefef;"></div>
<div class="t " style="left:1812.0px;top:893.57px;font-size:20.0px;transform:scaleX(0.9717);transform-origin:0 0;color:#333;">Abbrechen</div>
</div>
</body></html>
